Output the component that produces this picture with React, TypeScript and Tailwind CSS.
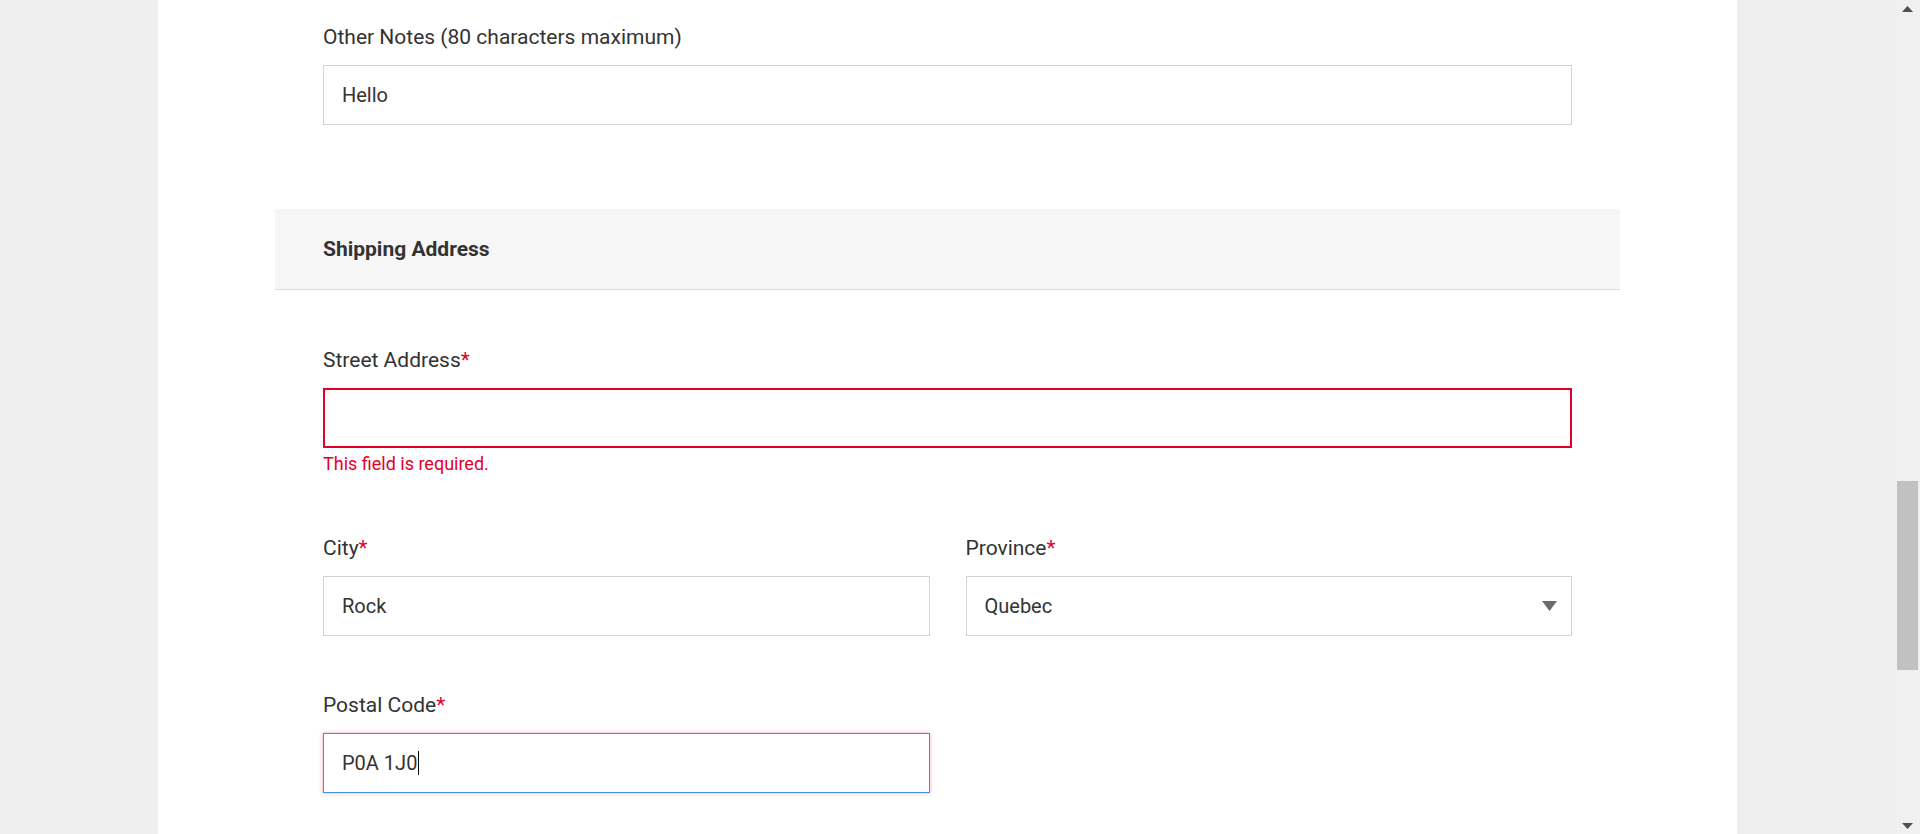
import React from 'react';

function Label({ text, required }: { text: string; required?: boolean }) {
  return (
    <div className="text-[21px] leading-[24px] text-[#333333]">
      {text}
      {required && <span className="text-[#e4002b]">*</span>}
    </div>
  );
}

function Field({ children, className = '' }: { children: React.ReactNode; className?: string }) {
  return (
    <div
      className={
        'flex h-[60px] items-center bg-white px-[18px] text-[20px] text-[#333333] ' + className
      }
    >
      {children}
    </div>
  );
}

function Scrollbar() {
  return (
    <div className="flex h-full w-[25px] shrink-0 flex-col items-center bg-[#f0f0f0]">
      <div className="flex h-[17px] w-full items-center justify-center">
        <svg width="11" height="6" viewBox="0 0 11 6">
          <path d="M5.5 0 L11 6 L0 6 Z" fill="#505050" />
        </svg>
      </div>
      <div className="h-[464px]" />
      <div className="h-[189px] w-[21px] bg-[#c1c1c1]" />
      <div className="flex-1" />
      <div className="flex h-[17px] w-full items-center justify-center">
        <svg width="11" height="6" viewBox="0 0 11 6">
          <path d="M0 0 L11 0 L5.5 6 Z" fill="#505050" />
        </svg>
      </div>
    </div>
  );
}

export default function App() {
  return (
    <div
      className="flex h-[834px] w-[1920px] overflow-hidden bg-[#efefef]"
      style={{ fontFamily: 'Roboto, "Liberation Sans", sans-serif' }}
    >
      <div className="flex flex-1 justify-center">
        <div className="h-full w-[1579px] bg-white">
          {/* other notes */}
          <div className="px-[165px] pt-[25px]">
            <Label text="Other Notes (80 characters maximum)" />
            <Field className="mt-[16px] border border-[#d3d3d3]">Hello</Field>
          </div>

          {/* shipping header */}
          <div className="mx-[117px] mt-[84px] flex h-[81px] items-center border-b border-[#dcdcdc] bg-[#f6f6f6] px-[48px]">
            <div className="text-[21px] font-bold leading-[24px] text-[#333333]">Shipping Address</div>
          </div>

          <div className="px-[165px]">
            <div className="mt-[58px]">
              <Label text="Street Address" required />
              <Field className="mt-[16px] h-[58px] border-2 border-[#e4002b]" />
              <div className="mt-[5px] text-[18px] leading-[22px] text-[#e4002b]">This field is required.</div>
            </div>

            <div className="mt-[61px] grid grid-cols-2 gap-x-[36px]">
              <div>
                <Label text="City" required />
                <Field className="mt-[16px] border border-[#d3d3d3]">Rock</Field>
              </div>
              <div>
                <Label text="Province" required />
                <Field className="mt-[16px] justify-between border border-[#d3d3d3] pr-[14px]">
                  <span>Quebec</span>
                  <svg width="15" height="10" viewBox="0 0 15 10">
                    <path d="M0 0 L15 0 L7.5 10 Z" fill="#6a6a6a" />
                  </svg>
                </Field>
              </div>
            </div>

            <div className="mt-[57px] grid grid-cols-2 gap-x-[36px]">
              <div>
                <Label text="Postal Code" required />
                <Field className="mt-[16px] border border-[#3b8fe6] shadow-[0_0_4px_rgba(228,0,43,0.35)]">
                  <span>P0A 1J0</span>
                  <span className="ml-px inline-block h-[24px] w-px bg-black" />
                </Field>
              </div>
            </div>
          </div>
        </div>
      </div>
      <Scrollbar />
    </div>
  );
}
